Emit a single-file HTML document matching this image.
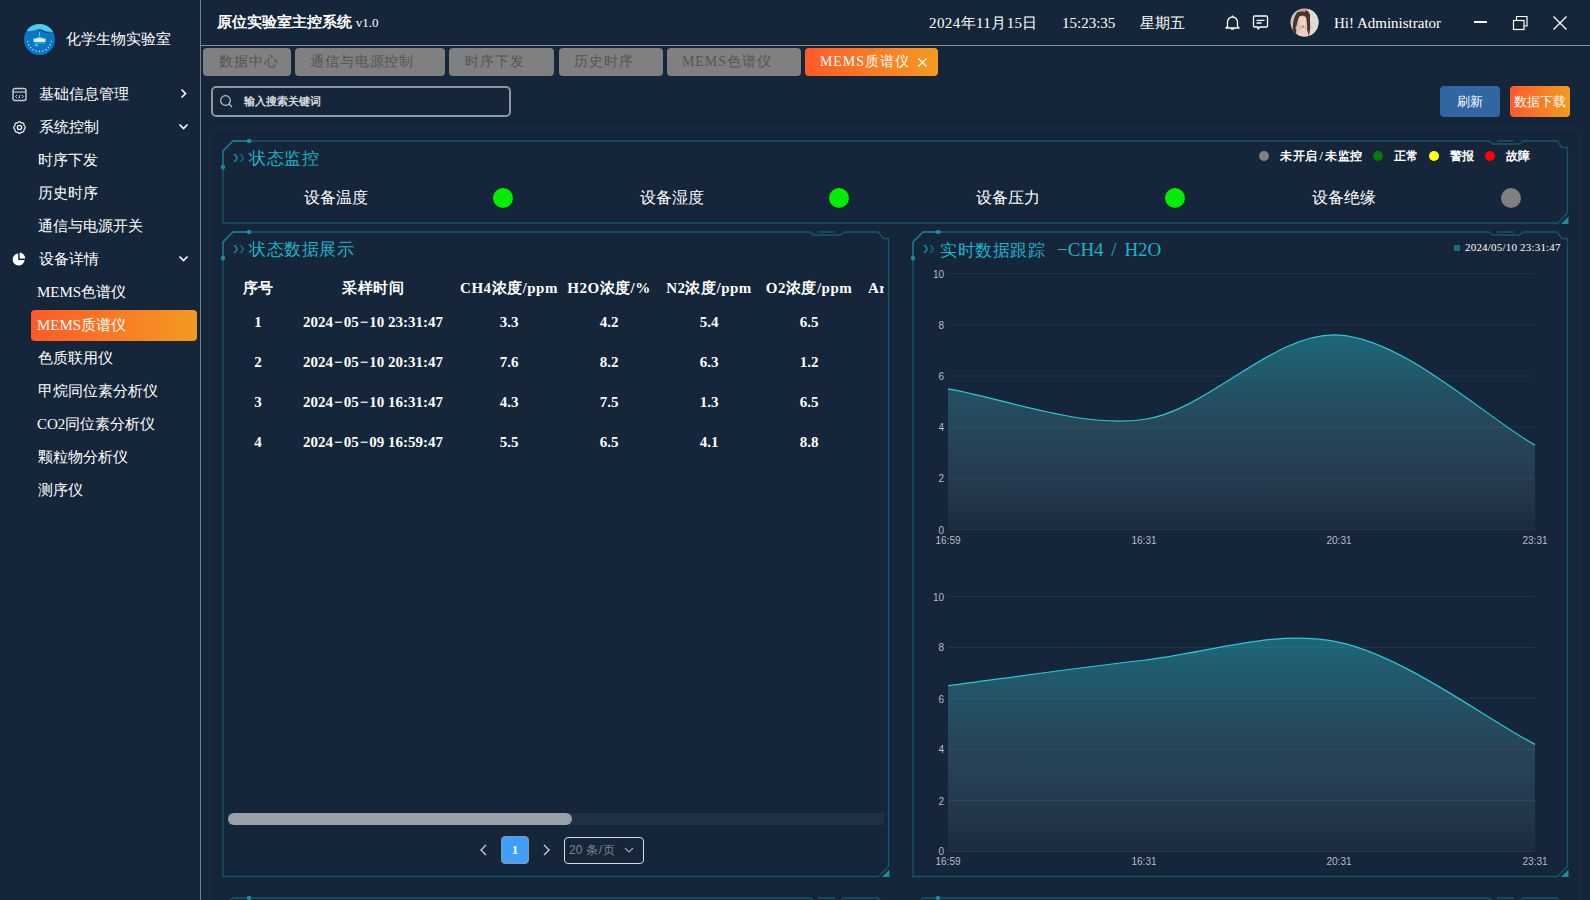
<!DOCTYPE html>
<html><head><meta charset="utf-8">
<style>
*{margin:0;padding:0;box-sizing:border-box}
html,body{width:1590px;height:900px;overflow:hidden;background:#15253a;font-family:"Liberation Serif",serif;color:#fff}
.a{position:absolute;white-space:nowrap}
.side{position:absolute;left:0;top:0;width:201px;height:900px;border-right:1px solid #7a7f86}
.mi{position:absolute;font-size:15px;line-height:20px;color:#fff}
.tab{position:absolute;top:48px;height:28px;background:#808080;border-radius:4px;color:#555;font-size:14px;line-height:28px;text-align:left;padding-left:16px;letter-spacing:0.9px}
.th{position:absolute;top:278px;font-size:15px;line-height:20px;font-weight:bold;text-align:center;letter-spacing:0.5px}
.td{position:absolute;font-size:15px;line-height:20px;font-weight:bold;text-align:center}
.ttl{position:absolute;color:#1fb1c6;font-size:17px;line-height:22px;letter-spacing:0.5px}
.lbl{position:absolute;font-size:16px;line-height:20px;color:#fff}
.dot{position:absolute;width:20px;height:20px;border-radius:50%}
.dash{margin:0 1px}
.ax{position:absolute;font-family:"Liberation Sans",sans-serif;font-size:10px;line-height:12px;color:#b8bec6}
</style></head><body>
<div class="side"></div>
<!-- header line -->
<div class="a" style="left:201px;top:45px;width:1389px;height:1px;background:#8a9099"></div>

<!-- logo -->
<svg class="a" style="left:23px;top:23px" width="33" height="33" viewBox="0 0 33 33">
<defs><clipPath id="lc"><circle cx="16.5" cy="16.5" r="15.5"/></clipPath></defs>
<g clip-path="url(#lc)">
<rect width="33" height="33" fill="#0b76c3"/>
<path d="M0 0H33V8.5Q27 9.5 22 8.2Q18 5.5 13 7Q7 8.5 0 7.5Z" fill="#4ccbee"/>
<path d="M13 6.8Q18 5 22.5 8.5Q25 9.3 28 8.5L26 10Q21 10 18 8Q15.5 7 13 6.8Z" fill="#0a4f8a"/>
</g>
<path d="M16.5 9v4" stroke="#7fd8f2" stroke-width="0.8"/>
<path d="M12.5 16Q16.5 11.5 20.5 16Z" fill="#59c9ec"/>
<rect x="10.5" y="15.5" width="12" height="3.5" fill="#ffffff" opacity="0.85"/>
<rect x="11" y="19.5" width="11" height="1" fill="#9fd6f0" opacity="0.6"/>
<rect x="12" y="21.5" width="3" height="1.5" fill="#5fd3f2"/>
<circle cx="28.3" cy="18.6" r="0.7" fill="#dff2fb"/><circle cx="27.3" cy="21.8" r="0.7" fill="#dff2fb"/><circle cx="25.4" cy="24.5" r="0.7" fill="#dff2fb"/><circle cx="22.9" cy="26.7" r="0.7" fill="#dff2fb"/><circle cx="19.8" cy="28.0" r="0.7" fill="#dff2fb"/><circle cx="16.5" cy="28.5" r="0.7" fill="#dff2fb"/><circle cx="13.2" cy="28.0" r="0.7" fill="#dff2fb"/><circle cx="10.1" cy="26.7" r="0.7" fill="#dff2fb"/><circle cx="7.6" cy="24.5" r="0.7" fill="#dff2fb"/><circle cx="5.7" cy="21.8" r="0.7" fill="#dff2fb"/><circle cx="4.7" cy="18.6" r="0.7" fill="#dff2fb"/>
</svg>
<div class="a" style="left:66px;top:29px;font-size:15px;line-height:20px">化学生物实验室</div>

<!-- sidebar menu -->
<svg class="a" style="left:11.5px;top:87px" width="15" height="15" viewBox="0 0 15 15"><rect x="1" y="1.5" width="13" height="12" rx="2" fill="none" stroke="#c8ccd2" stroke-width="1.4"/><line x1="1" y1="5" x2="14" y2="5" stroke="#c8ccd2" stroke-width="1.2"/><path d="M5 8l-1.5 1.5L5 11M10 8l1.5 1.5L10 11M8 7.8l-1 3.5" fill="none" stroke="#c8ccd2" stroke-width="1"/></svg>
<div class="mi" style="left:39px;top:84px">基础信息管理</div>
<svg class="a" style="left:179px;top:88px" width="9" height="11" viewBox="0 0 9 11"><path d="M2.5 1.5l4 4-4 4" fill="none" stroke="#fff" stroke-width="1.6"/></svg>

<svg class="a" style="left:12px;top:120px" width="15" height="15" viewBox="0 0 15 15"><path d="M12.03 5.62 Q14.56 7.50 12.03 9.38 Q12.49 12.49 9.38 12.03 Q7.50 14.56 5.62 12.03 Q2.51 12.49 2.97 9.38 Q0.44 7.50 2.97 5.62 Q2.51 2.51 5.62 2.97 Q7.50 0.44 9.38 2.97 Q12.49 2.51 12.03 5.62Z" fill="none" stroke="#fff" stroke-width="1.2" stroke-linejoin="round"/><circle cx="7.5" cy="7.5" r="2.1" fill="none" stroke="#fff" stroke-width="1.3"/></svg>
<div class="mi" style="left:39px;top:117px">系统控制</div>
<svg class="a" style="left:178px;top:122px" width="11" height="9" viewBox="0 0 11 9"><path d="M1.5 2.5l4 4 4-4" fill="none" stroke="#fff" stroke-width="1.6"/></svg>

<div class="mi" style="left:38px;top:150px">时序下发</div>
<div class="mi" style="left:38px;top:183px">历史时序</div>
<div class="mi" style="left:38px;top:216px">通信与电源开关</div>

<svg class="a" style="left:12px;top:252px" width="14" height="14" viewBox="0 0 14 14"><path d="M6.2 1.5A6 6 0 1 0 12.6 8H6.2Z" fill="#fff"/><path d="M7.6 0.6A6 6 0 0 1 13.3 6.4H7.6Z" fill="#fff"/></svg>
<div class="mi" style="left:39px;top:249px">设备详情</div>
<svg class="a" style="left:178px;top:254px" width="11" height="9" viewBox="0 0 11 9"><path d="M1.5 2.5l4 4 4-4" fill="none" stroke="#fff" stroke-width="1.6"/></svg>

<div class="mi" style="left:37px;top:282px">MEMS色谱仪</div>
<div class="a" style="left:31px;top:310px;width:166px;height:31px;border-radius:4px;background:linear-gradient(90deg,#ff5a2a,#f39a20)"></div>
<div class="mi" style="left:37px;top:315px">MEMS质谱仪</div>
<div class="mi" style="left:38px;top:348px">色质联用仪</div>
<div class="mi" style="left:38px;top:381px">甲烷同位素分析仪</div>
<div class="mi" style="left:37px;top:414px">CO2同位素分析仪</div>
<div class="mi" style="left:38px;top:447px">颗粒物分析仪</div>
<div class="mi" style="left:38px;top:480px">测序仪</div>

<!-- header -->
<div class="a" style="left:217px;top:12px;font-size:15px;line-height:20px;font-weight:bold">原位实验室主控系统 <span style="font-size:13px;font-weight:normal">v1.0</span></div>
<div class="a" style="left:929px;top:13px;font-size:15px;line-height:20px;letter-spacing:0.4px">2024年11月15日</div>
<div class="a" style="left:1062px;top:13px;font-size:15px;line-height:20px">15:23:35</div>
<div class="a" style="left:1140px;top:13px;font-size:15px;line-height:20px">星期五</div>
<svg class="a" style="left:1224px;top:14px" width="17" height="17" viewBox="0 0 17 17"><path d="M8.5 1.5v1M3.5 12.5V8a5 5 0 0 1 10 0v4.5l1.5 1.5H2Z M7 15h3" fill="none" stroke="#fff" stroke-width="1.3" stroke-linejoin="round"/></svg>
<svg class="a" style="left:1252px;top:14px" width="17" height="17" viewBox="0 0 17 17"><path d="M2.5 2h12a1 1 0 0 1 1 1v9a1 1 0 0 1-1 1H8l-2 2v-2H2.5a1 1 0 0 1-1-1V3a1 1 0 0 1 1-1Z" fill="none" stroke="#fff" stroke-width="1.3" stroke-linejoin="round"/><path d="M4.5 6.3h8M4.5 9h5" stroke="#fff" stroke-width="1.3"/></svg>
<svg class="a" style="left:1290px;top:8px" width="29" height="29" viewBox="0 0 29 29"><defs><clipPath id="cp"><circle cx="14.5" cy="14.5" r="14"/></clipPath></defs><g clip-path="url(#cp)"><rect width="29" height="29" fill="#cfc4ba"/><rect x="19" y="0" width="10" height="29" fill="#e2dcd6"/><path d="M3 26Q2 12 6 6Q10 1 16 2Q21 4 20 12Q21 20 19 28L17 28Q18 18 16 9Q12 6 9 9Q6 16 6 26Z" fill="#4a3329"/><path d="M9 9Q13 7 16 10Q17 15 15 18Q11 19 9.5 16Q8.5 12 9 9Z" fill="#efd2c2"/><path d="M7 29Q9 21 14 20Q18 21 19 29Z" fill="#edd0bf"/><path d="M5 20Q8 16 11 18L10.5 22Q7.5 22 5 20Z" fill="#e6bfae"/><circle cx="13" cy="18.5" r="0.9" fill="#d9534f"/><path d="M8 3Q12 0.5 16 2L15 4Q12 2.8 9 4Z" fill="#e58aa8"/></g></svg>
<div class="a" style="left:1334px;top:13px;font-size:15px;line-height:20px">Hi! Administrator</div>
<div class="a" style="left:1474px;top:21px;width:13px;height:2px;background:#fff"></div>
<svg class="a" style="left:1511px;top:14px" width="18" height="17" viewBox="0 0 18 17"><rect x="2.5" y="6.5" width="10.5" height="9" fill="none" stroke="#fff" stroke-width="1.2"/><path d="M5.5 6.5V2.5h10.5v9.5H13" fill="none" stroke="#fff" stroke-width="1.2"/></svg>
<svg class="a" style="left:1552px;top:15px" width="16" height="16" viewBox="0 0 16 16"><path d="M1.5 1.5l13 13M14.5 1.5l-13 13" stroke="#fff" stroke-width="1.3"/></svg>

<!-- tabs -->
<div class="tab" style="left:203px;width:88px">数据中心</div>
<div class="tab" style="left:295px;width:150px;padding-left:15px">通信与电源控制</div>
<div class="tab" style="left:449px;width:105px">时序下发</div>
<div class="tab" style="left:559px;width:104px;padding-left:15px">历史时序</div>
<div class="tab" style="left:667px;width:134px;padding-left:15px">MEMS色谱仪</div>
<div class="tab" style="left:805px;width:133px;background:linear-gradient(90deg,#ff5a2a,#f39a20);color:#fff;text-align:left;padding-left:15px">MEMS质谱仪</div>
<svg class="a" style="left:917px;top:57px" width="11" height="11" viewBox="0 0 11 11"><path d="M1.5 1.5l8 8M9.5 1.5l-8 8" stroke="#fff" stroke-width="1.2"/></svg>

<!-- search -->
<div class="a" style="left:211px;top:86px;width:300px;height:31px;border:2px solid #8f969d;border-radius:5px"></div>
<svg class="a" style="left:219px;top:94px" width="15" height="15" viewBox="0 0 15 15"><circle cx="6.5" cy="6.5" r="4.8" fill="none" stroke="#c0c6cc" stroke-width="1.2"/><path d="M10 10l3 3" stroke="#c0c6cc" stroke-width="1.2"/></svg>
<div class="a" style="left:244px;top:94px;font-size:11px;line-height:15px;font-weight:bold;color:#d6d9dc">输入搜索关键词</div>

<!-- buttons -->
<div class="a" style="left:1440px;top:86px;width:60px;height:31px;border-radius:4px;background:#3067a3;font-size:13px;line-height:31px;text-align:center">刷新</div>
<div class="a" style="left:1510px;top:86px;width:60px;height:31px;border-radius:4px;background:linear-gradient(90deg,#ff5a2a,#f39a20);font-size:13px;line-height:31px;text-align:center">数据下载</div>

<!-- subtle container -->
<div class="a" style="left:209px;top:127px;width:1372px;height:780px;border:2px solid #19293a;border-radius:6px"></div>

<!-- frames -->
<svg class="a" style="left:0;top:0" width="1590" height="900" viewBox="0 0 1590 900" fill="none">
<g stroke="#17566a" stroke-width="1.3">
<path d="M233 141H1489L1492.5 144H1519.5L1523 141H1557L1562 147.5H1567.5V213L1558 223H223V151Z"/>
<path d="M233 232H810L813.5 235H840.5L844 232H878L883.5 238.5H888.5V866.5L878.5 876.5H223V242Z"/>
<path d="M923 232H1489L1492.5 235H1519.5L1523 232H1557L1562 238.5H1567.5V866.5L1557.5 876.5H913V242Z"/>
<path d="M223 908L233 898H810L813.5 901H840.5L844 898H878L883.5 904.5H888.5V920"/><path d="M913 908L923 898H1489L1492.5 901H1519.5L1523 898H1557L1562 904.5H1567.5V920"/>
<path d="M1497 141H1514M818 232H835M1497 232H1514M818 898H835M1497 898H1514"/>
</g>
<g stroke="#1b7f90" stroke-width="1.3">
<path d="M252 141H233L223 151V170"/><path d="M252 232H233L223 242V261"/><path d="M942 232H923L913 242V261"/>

</g>
<g fill="#1c8c9c">
<circle cx="249" cy="141" r="2.2"/><circle cx="223" cy="167" r="2.2"/>
<circle cx="249" cy="232" r="2.2"/><circle cx="223" cy="258" r="2.2"/>
<circle cx="938" cy="232" r="2.2"/><circle cx="913" cy="258" r="2.2"/>
<circle cx="249" cy="898" r="2.2"/><circle cx="938" cy="898" r="2.2"/>
<path d="M1561 224H1568.5V216.5Z"/><path d="M882 877H889.5V869.5Z"/><path d="M1561 877H1568.5V869.5Z"/>
</g>
</svg>

<!-- panel 1 -->
<svg class="a" style="left:232px;top:153px" width="13" height="10" viewBox="0 0 13 10"><path d="M1 1H3.6Q6 3.6 6 5Q6 6.4 3.6 9H1Q4 6.2 4 5Q4 3.8 1 1Z" fill="#1a7f90"/><path d="M7 1H9.6Q12 3.6 12 5Q12 6.4 9.6 9H7Q10 6.2 10 5Q10 3.8 7 1Z" fill="#155f70"/></svg>
<div class="ttl" style="left:249px;top:148px">状态监控</div>

<div class="dot" style="left:1259px;top:151px;width:10px;height:10px;background:#808080"></div>
<div class="a" style="left:1280px;top:148px;font-size:12px;line-height:16px;font-weight:bold;letter-spacing:0.5px">未开启<span style="margin:0 2px">/</span>未监控</div>
<div class="dot" style="left:1373px;top:151px;width:10px;height:10px;background:#087a08"></div>
<div class="a" style="left:1394px;top:148px;font-size:12px;line-height:16px;font-weight:bold">正常</div>
<div class="dot" style="left:1429px;top:151px;width:10px;height:10px;background:#ffff10"></div>
<div class="a" style="left:1450px;top:148px;font-size:12px;line-height:16px;font-weight:bold">警报</div>
<div class="dot" style="left:1485px;top:151px;width:10px;height:10px;background:#ff0000"></div>
<div class="a" style="left:1506px;top:148px;font-size:12px;line-height:16px;font-weight:bold">故障</div>

<div class="lbl" style="left:304px;top:188px">设备温度</div><div class="dot" style="left:493px;top:188px;background:#00ee00"></div>
<div class="lbl" style="left:640px;top:188px">设备湿度</div><div class="dot" style="left:829px;top:188px;background:#00ee00"></div>
<div class="lbl" style="left:976px;top:188px">设备压力</div><div class="dot" style="left:1165px;top:188px;background:#00ee00"></div>
<div class="lbl" style="left:1312px;top:188px">设备绝缘</div><div class="dot" style="left:1501px;top:188px;background:#808080"></div>

<!-- panel 2 -->
<svg class="a" style="left:232px;top:244px" width="13" height="10" viewBox="0 0 13 10"><path d="M1 1H3.6Q6 3.6 6 5Q6 6.4 3.6 9H1Q4 6.2 4 5Q4 3.8 1 1Z" fill="#1a7f90"/><path d="M7 1H9.6Q12 3.6 12 5Q12 6.4 9.6 9H7Q10 6.2 10 5Q10 3.8 7 1Z" fill="#155f70"/></svg>
<div class="ttl" style="left:249px;top:239px">状态数据展示</div>

<div class="th" style="left:228px;width:60px">序号</div>
<div class="th" style="left:298px;width:150px">采样时间</div>
<div class="th" style="left:459px;width:100px">CH4浓度/ppm</div>
<div class="th" style="left:559px;width:100px">H2O浓度/%</div>
<div class="th" style="left:659px;width:100px">N2浓度/ppm</div>
<div class="th" style="left:759px;width:100px">O2浓度/ppm</div>
<div class="th" style="left:868px;width:16px;overflow:hidden;text-align:left">Ar</div>

<div id="rows">
<div class="td" style="left:228px;width:60px;top:312px">1</div>
<div class="td" style="left:298px;width:150px;top:312px">2024<span class="dash">−</span>05<span class="dash">−</span>10 23:31:47</div>
<div class="td" style="left:459px;width:100px;top:312px">3.3</div>
<div class="td" style="left:559px;width:100px;top:312px">4.2</div>
<div class="td" style="left:659px;width:100px;top:312px">5.4</div>
<div class="td" style="left:759px;width:100px;top:312px">6.5</div>
<div class="td" style="left:228px;width:60px;top:352px">2</div>
<div class="td" style="left:298px;width:150px;top:352px">2024<span class="dash">−</span>05<span class="dash">−</span>10 20:31:47</div>
<div class="td" style="left:459px;width:100px;top:352px">7.6</div>
<div class="td" style="left:559px;width:100px;top:352px">8.2</div>
<div class="td" style="left:659px;width:100px;top:352px">6.3</div>
<div class="td" style="left:759px;width:100px;top:352px">1.2</div>
<div class="td" style="left:228px;width:60px;top:392px">3</div>
<div class="td" style="left:298px;width:150px;top:392px">2024<span class="dash">−</span>05<span class="dash">−</span>10 16:31:47</div>
<div class="td" style="left:459px;width:100px;top:392px">4.3</div>
<div class="td" style="left:559px;width:100px;top:392px">7.5</div>
<div class="td" style="left:659px;width:100px;top:392px">1.3</div>
<div class="td" style="left:759px;width:100px;top:392px">6.5</div>
<div class="td" style="left:228px;width:60px;top:432px">4</div>
<div class="td" style="left:298px;width:150px;top:432px">2024<span class="dash">−</span>05<span class="dash">−</span>09 16:59:47</div>
<div class="td" style="left:459px;width:100px;top:432px">5.5</div>
<div class="td" style="left:559px;width:100px;top:432px">6.5</div>
<div class="td" style="left:659px;width:100px;top:432px">4.1</div>
<div class="td" style="left:759px;width:100px;top:432px">8.8</div>
</div>
<!--endrows-->

<div class="a" style="left:228px;top:813px;width:656px;height:12px;background:#1f3142"></div>
<div class="a" style="left:228px;top:813px;width:344px;height:12px;border-radius:6px;background:#9aa0a8"></div>

<svg class="a" style="left:478px;top:843px" width="12" height="14" viewBox="0 0 12 14"><path d="M8 2L3 7l5 5" fill="none" stroke="#c8ccd2" stroke-width="1.4"/></svg>
<div class="a" style="left:501px;top:836px;width:28px;height:28px;border-radius:4px;background:#409eff;border:1px solid #8f959c;font-family:'Liberation Serif',serif;font-size:13px;font-weight:bold;line-height:26px;text-align:center">1</div>
<svg class="a" style="left:540px;top:843px" width="12" height="14" viewBox="0 0 12 14"><path d="M4 2l5 5-5 5" fill="none" stroke="#c8ccd2" stroke-width="1.4"/></svg>
<div class="a" style="left:564px;top:837px;width:80px;height:27px;border:1px solid #d8dce0;border-radius:4px"></div>
<div class="a" style="left:569px;top:842px;font-family:'Liberation Sans',sans-serif;font-size:12px;line-height:16px;color:#80868d">20 条<span style="margin:0 1px">/</span>页</div>
<svg class="a" style="left:623px;top:845px" width="12" height="10" viewBox="0 0 12 10"><path d="M2 3l4 4 4-4" fill="none" stroke="#9aa0a8" stroke-width="1.2"/></svg>

<!-- panel 3 -->
<svg class="a" style="left:922px;top:244px" width="13" height="10" viewBox="0 0 13 10"><path d="M1 1H3.6Q6 3.6 6 5Q6 6.4 3.6 9H1Q4 6.2 4 5Q4 3.8 1 1Z" fill="#1a7f90"/><path d="M7 1H9.6Q12 3.6 12 5Q12 6.4 9.6 9H7Q10 6.2 10 5Q10 3.8 7 1Z" fill="#155f70"/></svg>
<div class="ttl" style="left:940px;top:239px">实时数据跟踪<span style="font-size:19px;letter-spacing:0;word-spacing:3px;margin-left:12px">−CH4 / H2O</span></div>
<div class="a" style="left:1454px;top:245px;width:6px;height:6px;background:#1a6e7c"></div>
<div class="a" style="left:1465px;top:241px;font-size:11px;line-height:13px;letter-spacing:0.2px">2024/05/10 23:31:47</div>

<svg class="a" style="left:0;top:0" width="1590" height="900" viewBox="0 0 1590 900" id="charts">
<line x1="948" y1="529.6" x2="1535" y2="529.6" stroke="#223446" stroke-width="1"/>
<line x1="948" y1="478.4" x2="1535" y2="478.4" stroke="#223446" stroke-width="1"/>
<line x1="948" y1="427.2" x2="1535" y2="427.2" stroke="#223446" stroke-width="1"/>
<line x1="948" y1="376.0" x2="1535" y2="376.0" stroke="#223446" stroke-width="1"/>
<line x1="948" y1="324.8" x2="1535" y2="324.8" stroke="#223446" stroke-width="1"/>
<line x1="948" y1="273.6" x2="1535" y2="273.6" stroke="#223446" stroke-width="1"/>
<linearGradient id="g0" gradientUnits="userSpaceOnUse" x1="0" y1="334.9" x2="0" y2="529.6"><stop offset="0" stop-color="rgb(36,185,200)" stop-opacity="0.45"/><stop offset="0.45" stop-color="rgb(75,150,165)" stop-opacity="0.3"/><stop offset="1" stop-color="rgb(160,190,205)" stop-opacity="0.04"/></linearGradient>
<path d="M948.00 388.80 C996.92 396.48 1078.45 428.48 1143.67 419.52 C1208.89 410.56 1274.11 330.77 1339.33 335.04 C1404.55 339.31 1486.08 417.60 1535.00 445.12 L1535 529.6 L948 529.6 Z" fill="url(#g0)"/>
<path d="M948.00 388.80 C996.92 396.48 1078.45 428.48 1143.67 419.52 C1208.89 410.56 1274.11 330.77 1339.33 335.04 C1404.55 339.31 1486.08 417.60 1535.00 445.12" fill="none" stroke="#2cc8d8" stroke-width="1.2"/>
<line x1="948" y1="851.5" x2="1535" y2="851.5" stroke="#223446" stroke-width="1"/>
<line x1="948" y1="800.5" x2="1535" y2="800.5" stroke="#223446" stroke-width="1"/>
<line x1="948" y1="749.5" x2="1535" y2="749.5" stroke="#223446" stroke-width="1"/>
<line x1="948" y1="698.5" x2="1535" y2="698.5" stroke="#223446" stroke-width="1"/>
<line x1="948" y1="647.5" x2="1535" y2="647.5" stroke="#223446" stroke-width="1"/>
<line x1="948" y1="596.5" x2="1535" y2="596.5" stroke="#223446" stroke-width="1"/>
<linearGradient id="g1" gradientUnits="userSpaceOnUse" x1="0" y1="638.2" x2="0" y2="851.5"><stop offset="0" stop-color="rgb(36,185,200)" stop-opacity="0.45"/><stop offset="0.45" stop-color="rgb(75,150,165)" stop-opacity="0.3"/><stop offset="1" stop-color="rgb(160,190,205)" stop-opacity="0.04"/></linearGradient>
<path d="M948.00 685.75 C996.92 679.38 1078.45 667.48 1143.67 660.25 C1208.89 653.02 1274.11 628.38 1339.33 642.40 C1404.55 656.42 1486.08 718.90 1535.00 744.40 L1535 851.5 L948 851.5 Z" fill="url(#g1)"/>
<path d="M948.00 685.75 C996.92 679.38 1078.45 667.48 1143.67 660.25 C1208.89 653.02 1274.11 628.38 1339.33 642.40 C1404.55 656.42 1486.08 718.90 1535.00 744.40" fill="none" stroke="#2cc8d8" stroke-width="1.2"/>
</svg>
<div id="axes">
<div class="ax" style="left:924px;top:525px;width:20px;text-align:right">0</div>
<div class="ax" style="left:924px;top:473px;width:20px;text-align:right">2</div>
<div class="ax" style="left:924px;top:422px;width:20px;text-align:right">4</div>
<div class="ax" style="left:924px;top:371px;width:20px;text-align:right">6</div>
<div class="ax" style="left:924px;top:320px;width:20px;text-align:right">8</div>
<div class="ax" style="left:924px;top:269px;width:20px;text-align:right">10</div>
<div class="ax" style="left:928px;top:535px;width:40px;text-align:center">16:59</div>
<div class="ax" style="left:1124px;top:535px;width:40px;text-align:center">16:31</div>
<div class="ax" style="left:1319px;top:535px;width:40px;text-align:center">20:31</div>
<div class="ax" style="left:1515px;top:535px;width:40px;text-align:center">23:31</div>
<div class="ax" style="left:924px;top:846px;width:20px;text-align:right">0</div>
<div class="ax" style="left:924px;top:796px;width:20px;text-align:right">2</div>
<div class="ax" style="left:924px;top:744px;width:20px;text-align:right">4</div>
<div class="ax" style="left:924px;top:694px;width:20px;text-align:right">6</div>
<div class="ax" style="left:924px;top:642px;width:20px;text-align:right">8</div>
<div class="ax" style="left:924px;top:592px;width:20px;text-align:right">10</div>
<div class="ax" style="left:928px;top:856px;width:40px;text-align:center">16:59</div>
<div class="ax" style="left:1124px;top:856px;width:40px;text-align:center">16:31</div>
<div class="ax" style="left:1319px;top:856px;width:40px;text-align:center">20:31</div>
<div class="ax" style="left:1515px;top:856px;width:40px;text-align:center">23:31</div>
</div>
<!--endaxes-->

</body></html>
